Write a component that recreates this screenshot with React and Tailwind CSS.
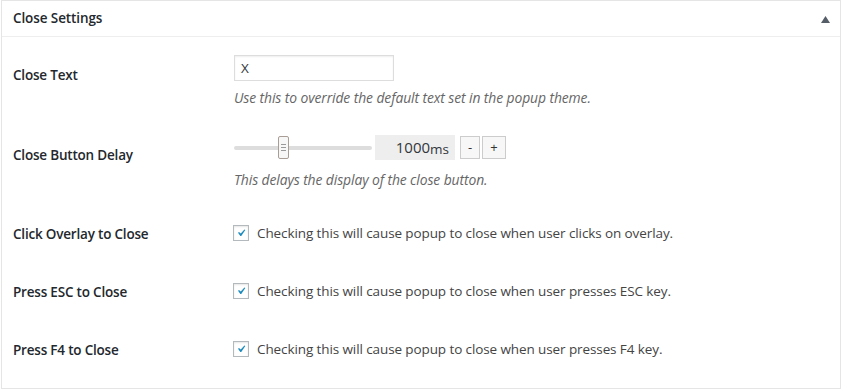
import React from "react";

const checkRows = [
  { label: "Click Overlay to Close", text: "Checking this will cause popup to close when user clicks on overlay." },
  { label: "Press ESC to Close", text: "Checking this will cause popup to close when user presses ESC key." },
  { label: "Press F4 to Close", text: "Checking this will cause popup to close when user presses F4 key." },
];

function Check() {
  return (
    <span className="flex h-[16px] w-[16px] items-center justify-center border border-[#b4b9be] bg-white shadow-[inset_0_1px_2px_rgba(0,0,0,0.1)]">
      <svg width="14" height="14" viewBox="0 0 20 20">
        <path d="M14.83 4.89l1.34.94-5.81 8.38H9.02L5.78 9.67l1.34-1.25 2.57 2.4z" fill="#1e8cbe" />
      </svg>
    </span>
  );
}

export default function App() {
  return (
    <div className="min-h-[391px] bg-white pl-[1px] pr-[6px] pb-[3px] font-['Open_Sans','Noto_Sans',sans-serif] text-[#23282d]">
      <div className="border border-[#e5e5e5] bg-white">
        {/* header */}
        <div className="flex h-[36px] items-center justify-between border-b border-[#eee] pl-[11px] pr-[10px]">
          <h2 className="text-[13.5px] font-semibold tracking-[-0.1px]">Close Settings</h2>
          <svg width="9" height="7" viewBox="0 0 9 7" className="mt-[2px]">
            <path d="M4.5 0L9 7H0z" fill="#555d66" />
          </svg>
        </div>

        <div className="pl-[11px] pt-[3px] pb-[10px]">
          {/* Close Text */}
          <div className="flex h-[80px]">
            <div className="w-[221px] pt-[25px] text-[13.5px] font-semibold leading-[20px] tracking-[-0.2px]">Close Text</div>
            <div className="pt-[15px]">
              <div className="flex h-[26px] w-[160px] items-center border border-[#ddd] px-[6px] text-[13.5px] text-[#32373c] shadow-[inset_0_1px_2px_rgba(0,0,0,0.07)]">
                X
              </div>
              <p className="mt-[7px] text-[13.9px] italic leading-[20px] tracking-[-0.1px] text-[#666]">
                Use this to override the default text set in the popup theme.
              </p>
            </div>
          </div>

          {/* Close Button Delay */}
          <div className="flex h-[84px]">
            <div className="w-[221px] pt-[25px] text-[13.5px] font-semibold leading-[20px] tracking-[-0.2px]">Close Button Delay</div>
            <div className="pt-[15px]">
              <div className="flex h-[25px] items-center">
                <div className="relative h-[4px] w-[138px] rounded-[2px] bg-[#ddd]">
                  <div className="absolute left-[44px] top-[-10px] flex h-[23px] w-[11px] flex-col items-center justify-center gap-[2px] rounded-[2px] border border-[#a89e96] bg-[#f7f7f7]">
                    <span className="h-px w-[5px] bg-[#999]" />
                    <span className="h-px w-[5px] bg-[#999]" />
                    <span className="h-px w-[5px] bg-[#999]" />
                  </div>
                </div>
                <div className="ml-[3px] flex h-[25px] w-[80px] items-center justify-end bg-[#eee] pr-[6px]">
                  <span className="text-[15px] leading-none text-[#32373c]">1000</span>
                  <span className="mt-[4px] text-[13.5px] leading-none text-[#32373c]">ms</span>
                </div>
                <button className="ml-[5px] flex h-[23px] w-[20px] items-center justify-center border border-[#ccc] bg-[#f7f7f7] text-[13px] leading-none text-[#333]">-</button>
                <button className="ml-[2px] flex h-[23px] w-[24px] items-center justify-center border border-[#ccc] bg-[#f7f7f7] text-[13px] leading-none text-[#333]">+</button>
              </div>
              <p className="mt-[10px] text-[13.9px] italic leading-[20px] tracking-[-0.1px] text-[#666]">
                This delays the display of the close button.
              </p>
            </div>
          </div>

          {checkRows.map((r) => (
            <div key={r.label} className="flex h-[58px] items-center">
              <div className="w-[220px] pt-[2px] text-[13.5px] font-semibold leading-[20px] tracking-[-0.2px]">{r.label}</div>
              <div className="flex items-center gap-[8px]">
                <Check />
                <span className="text-[13.5px] leading-[20px] tracking-[-0.1px] text-[#444]">{r.text}</span>
              </div>
            </div>
          ))}
        </div>
      </div>
    </div>
  );
}
